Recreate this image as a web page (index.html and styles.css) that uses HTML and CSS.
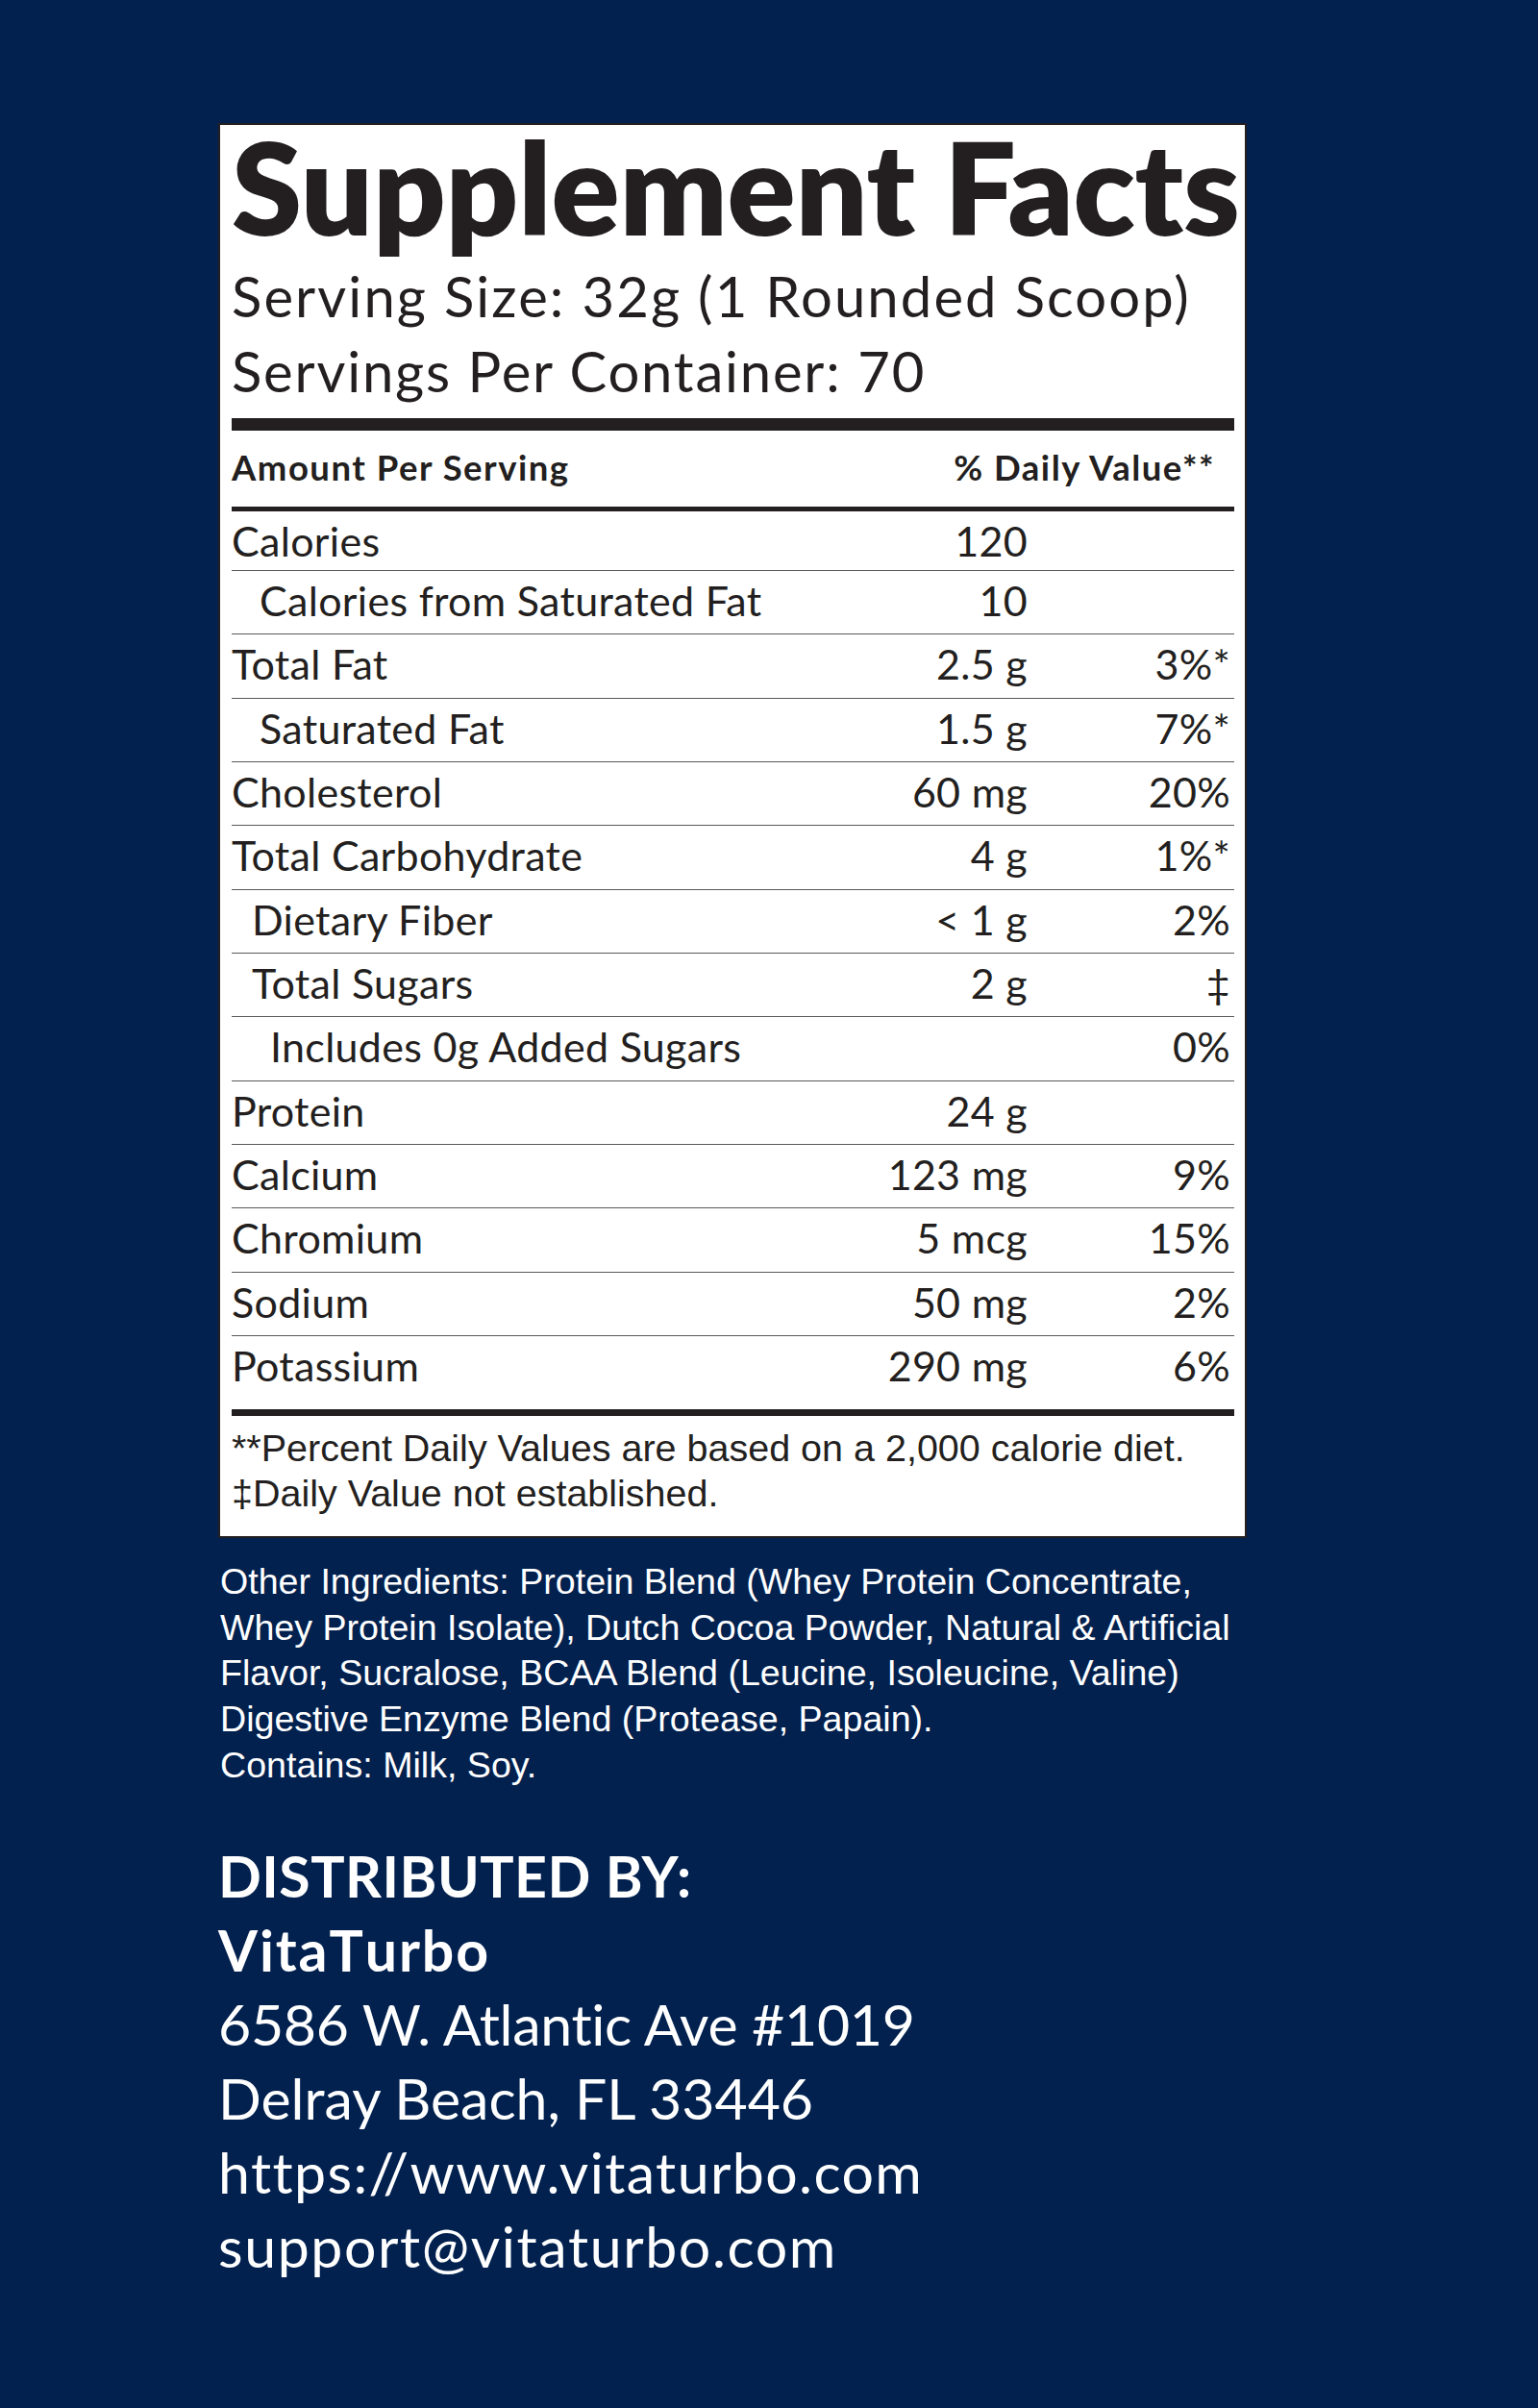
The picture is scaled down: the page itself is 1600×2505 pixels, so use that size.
FILE: index.html
```html
<!DOCTYPE html>
<html lang="en">
<head>
<meta charset="utf-8">
<title>Supplement Facts</title>
<link rel="stylesheet" href="styles.css">
</head>
<body>
<div class="page">
  <section class="facts">
    <h1 class="title">Supplement Facts</h1>
    <div class="serving">Serving Size: 32g (1 Rounded Scoop)</div>
    <div class="serving">Servings Per Container: 70</div>
    <div class="bar bar-13"></div>
    <div class="head">
      <span>Amount Per Serving</span>
      <span>% Daily Value**</span>
    </div>
    <div class="bar bar-5"></div>
    <div class="rows">
      <div class="row first"><span class="lbl">Calories</span><span class="amt">120</span><span class="dv"></span></div>
      <div class="row"><span class="lbl i1">Calories from Saturated Fat</span><span class="amt">10</span><span class="dv"></span></div>
      <div class="row"><span class="lbl">Total Fat</span><span class="amt">2.5 g</span><span class="dv">3%*</span></div>
      <div class="row"><span class="lbl i1">Saturated Fat</span><span class="amt">1.5 g</span><span class="dv">7%*</span></div>
      <div class="row"><span class="lbl">Cholesterol</span><span class="amt">60 mg</span><span class="dv">20%</span></div>
      <div class="row"><span class="lbl">Total Carbohydrate</span><span class="amt">4 g</span><span class="dv">1%*</span></div>
      <div class="row"><span class="lbl i2">Dietary Fiber</span><span class="amt">&lt; 1 g</span><span class="dv">2%</span></div>
      <div class="row"><span class="lbl i2">Total Sugars</span><span class="amt">2 g</span><span class="dv">‡</span></div>
      <div class="row"><span class="lbl i3">Includes 0g Added Sugars</span><span class="amt"></span><span class="dv">0%</span></div>
      <div class="row"><span class="lbl">Protein</span><span class="amt">24 g</span><span class="dv"></span></div>
      <div class="row"><span class="lbl">Calcium</span><span class="amt">123 mg</span><span class="dv">9%</span></div>
      <div class="row"><span class="lbl">Chromium</span><span class="amt">5 mcg</span><span class="dv">15%</span></div>
      <div class="row"><span class="lbl">Sodium</span><span class="amt">50 mg</span><span class="dv">2%</span></div>
      <div class="row last"><span class="lbl">Potassium</span><span class="amt">290 mg</span><span class="dv">6%</span></div>
    </div>
    <div class="bar bar-7"></div>
    <p class="foot">**Percent Daily Values are based on a 2,000 calorie diet.<br>‡Daily Value not established.</p>
  </section>

  <p class="ingredients">Other Ingredients: Protein Blend (Whey Protein Concentrate,<br>Whey Protein Isolate), Dutch Cocoa Powder, Natural &amp; Artificial<br>Flavor, Sucralose, BCAA Blend (Leucine, Isoleucine, Valine)<br>Digestive Enzyme Blend (Protease, Papain).<br>Contains: Milk, Soy.</p>

  <address class="dist">
    <div class="strong l1">DISTRIBUTED BY:</div>
    <div class="strong l2">VitaTurbo</div>
    <div class="l3">6586 W. Atlantic Ave #1019</div>
    <div class="l4">Delray Beach, FL 33446</div>
    <div class="l5">https://www.vitaturbo.com</div>
    <div class="l6">support@vitaturbo.com</div>
  </address>
</div>
</body>
</html>
```

FILE: styles.css
```css
html, body {
  margin: 0;
  padding: 0;
  background: #02214f;
}

body {
  min-height: 2505px;
  font-family: Lato, "Open Sans", sans-serif;
  color: #231f20;
  font-variant-ligatures: none;
}

.page {
  padding: 128px 0 0 227px;
}

.facts {
  box-sizing: border-box;
  width: 1070px;
  background: #ffffff;
  border: 2px solid #231f20;
  padding: 0 11px 21px 12px;
}

.title {
  margin: -2.4px 0 0 0;
  padding-bottom: 9px;
  font-family: Lato, sans-serif;
  font-weight: 800;
  font-size: 132px;
  line-height: 132px;
  letter-spacing: -0.2px;
  white-space: nowrap;
}

.serving {
  font-size: 58px;
  line-height: 78px;
  font-weight: 400;
  letter-spacing: 1.8px;
  white-space: nowrap;
}

.serving:first-of-type {
  letter-spacing: 2.1px;
}

.bar {
  background: #231f20;
}

.bar-13 {
  height: 13px;
  margin-top: 10.4px;
}

.bar-5 {
  height: 5px;
}

.bar-7 {
  height: 7px;
}

.head {
  box-sizing: border-box;
  display: flex;
  justify-content: space-between;
  height: 79px;
  padding: 0 20px 3px 0;
  font-size: 36.5px;
  line-height: 76px;
  font-weight: 700;
  letter-spacing: 1.5px;
  white-space: nowrap;
}

.row {
  box-sizing: border-box;
  display: grid;
  grid-template-columns: 1fr 260px 215px;
  height: 66.33px;
  padding-top: 9px;
  border-bottom: 1px solid #58595b;
  font-size: 43px;
  line-height: 43px;
  font-weight: 400;
  letter-spacing: 0.3px;
  white-space: nowrap;
}

.row.first {
  height: 62px;
}

.row.last {
  height: 76px;
  border-bottom: none;
}

.i1 { padding-left: 29px; }
.i2 { padding-left: 21px; }
.i3 { padding-left: 40px; }

.amt {
  text-align: right;
}

.dv {
  text-align: right;
  padding-right: 4px;
}

.foot {
  margin: 10px 0 0 0;
  font-family: "Liberation Sans", Arial, sans-serif;
  font-size: 39.5px;
  line-height: 47px;
  white-space: nowrap;
}

.ingredients {
  margin: 22px 0 0 0;
  padding-left: 2px;
  color: #ffffff;
  font-family: "Liberation Sans", Arial, sans-serif;
  font-size: 37.6px;
  line-height: 47.75px;
  white-space: nowrap;
}

.dist {
  margin-top: 52px;
  color: #ffffff;
  font-style: normal;
  font-family: Lato, sans-serif;
  font-size: 59px;
  line-height: 77px;
  white-space: nowrap;
}

.dist .strong {
  font-weight: 700;
}

.l1 { letter-spacing: 0.5px; }
.l2 { letter-spacing: 1.9px; font-kerning: none; }
.l3 { letter-spacing: -0.3px; }
.l4 { letter-spacing: 0px; }
.l5 { letter-spacing: 1.4px; }
.l6 { letter-spacing: 1.6px; }
```
